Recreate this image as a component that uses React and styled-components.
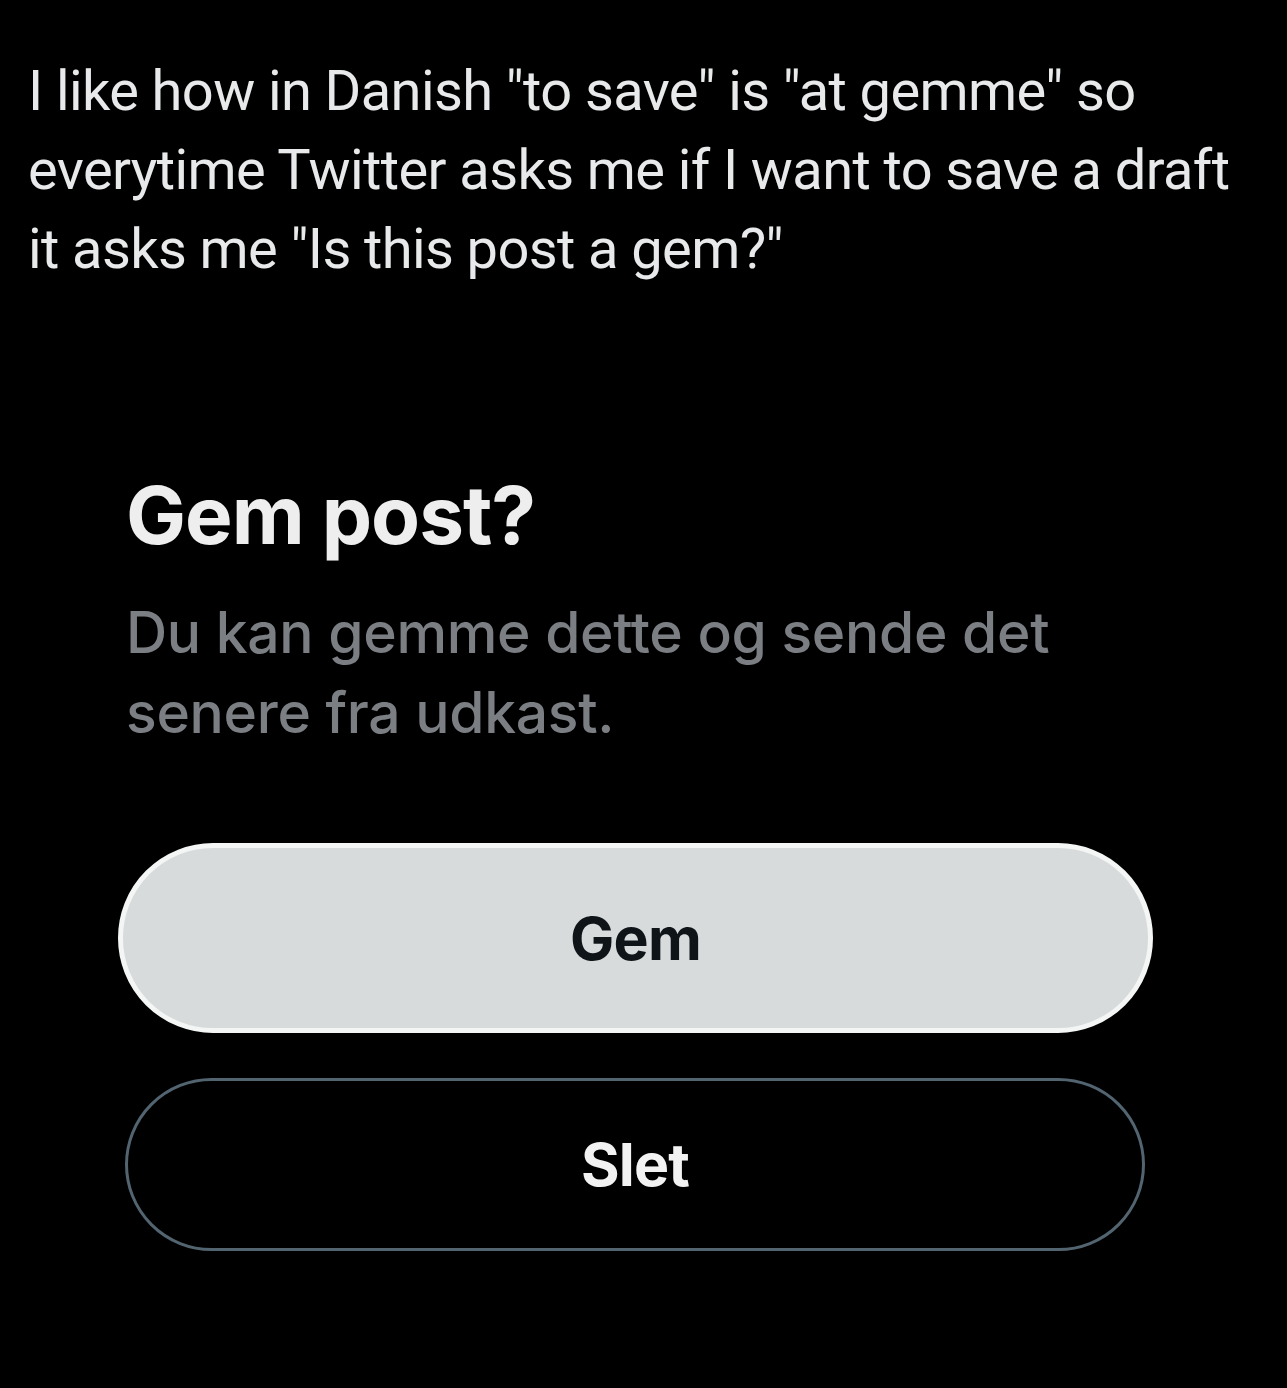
import React from "react";
import styled, { createGlobalStyle } from "styled-components";

const Global = createGlobalStyle`
  html, body { margin: 0; padding: 0; background: #000; }
  body { font-family: Roboto, "Liberation Sans", sans-serif; }
`;

const Page = styled.div`
  width: 1287px;
  height: 1388px;
  background: #000;
  box-sizing: border-box;
  padding: 52px 0 0 28px;
  overflow: hidden;
`;

const Tweet = styled.p`
  margin: 0;
  width: 1250px;
  font-family: Roboto, "Liberation Sans", sans-serif;
  font-weight: 400;
  font-size: 56px;
  line-height: 79px;
  letter-spacing: -0.6px;
  color: #e7e9ea;
  white-space: nowrap;
`;

const Dialog = styled.div`
  margin: 176px 0 0 90px;
  width: 1035px;
  display: flex;
  flex-direction: column;
`;

const Title = styled.h2`
  margin: 0 0 0 8px;
  font-family: Inter, "Liberation Sans", sans-serif;
  font-weight: 700;
  font-size: 80px;
  line-height: 100px;
  letter-spacing: -1px;
  color: #eeeeee;
`;

const Body = styled.p`
  margin: 28px 0 0 8px;
  font-family: Inter, "Liberation Sans", sans-serif;
  font-weight: 450;
  font-size: 57px;
  line-height: 80px;
  letter-spacing: -0.3px;
  color: #7b7f83;
  width: 1010px;
`;

const Actions = styled.div`
  margin-top: 90px;
  display: flex;
  flex-direction: column;
  gap: 45px;
`;

const Button = styled.button`
  box-sizing: border-box;
  width: ${(p) => (p.$primary ? "1035px" : "1020px")};
  height: ${(p) => (p.$primary ? "190px" : "173px")};
  margin-left: ${(p) => (p.$primary ? "0" : "7px")};
  border-radius: 999px;
  border: ${(p) => (p.$primary ? "5px solid #f4f5f5" : "3px solid #536471")};
  background: ${(p) => (p.$primary ? "#d7dbdc" : "#000")};
  color: ${(p) => (p.$primary ? "#0f1419" : "#f2f2f2")};
  font-family: Inter, "Liberation Sans", sans-serif;
  font-weight: 700;
  font-size: 59px;
  letter-spacing: -0.8px;
  display: flex;
  align-items: center;
  justify-content: center;
  padding: 0;
`;

export default function App() {
  return (
    <>
      <Global />
      <Page>
        <Tweet>
          I like how in Danish "to save" is "at gemme" so
          <br />
          everytime Twitter asks me if I want to save a draft
          <br />
          it asks me "Is this post a gem?"
        </Tweet>
        <Dialog>
          <Title>Gem post?</Title>
          <Body>Du kan gemme dette og sende det senere fra udkast.</Body>
          <Actions>
            <Button $primary>Gem</Button>
            <Button>Slet</Button>
          </Actions>
        </Dialog>
      </Page>
    </>
  );
}
